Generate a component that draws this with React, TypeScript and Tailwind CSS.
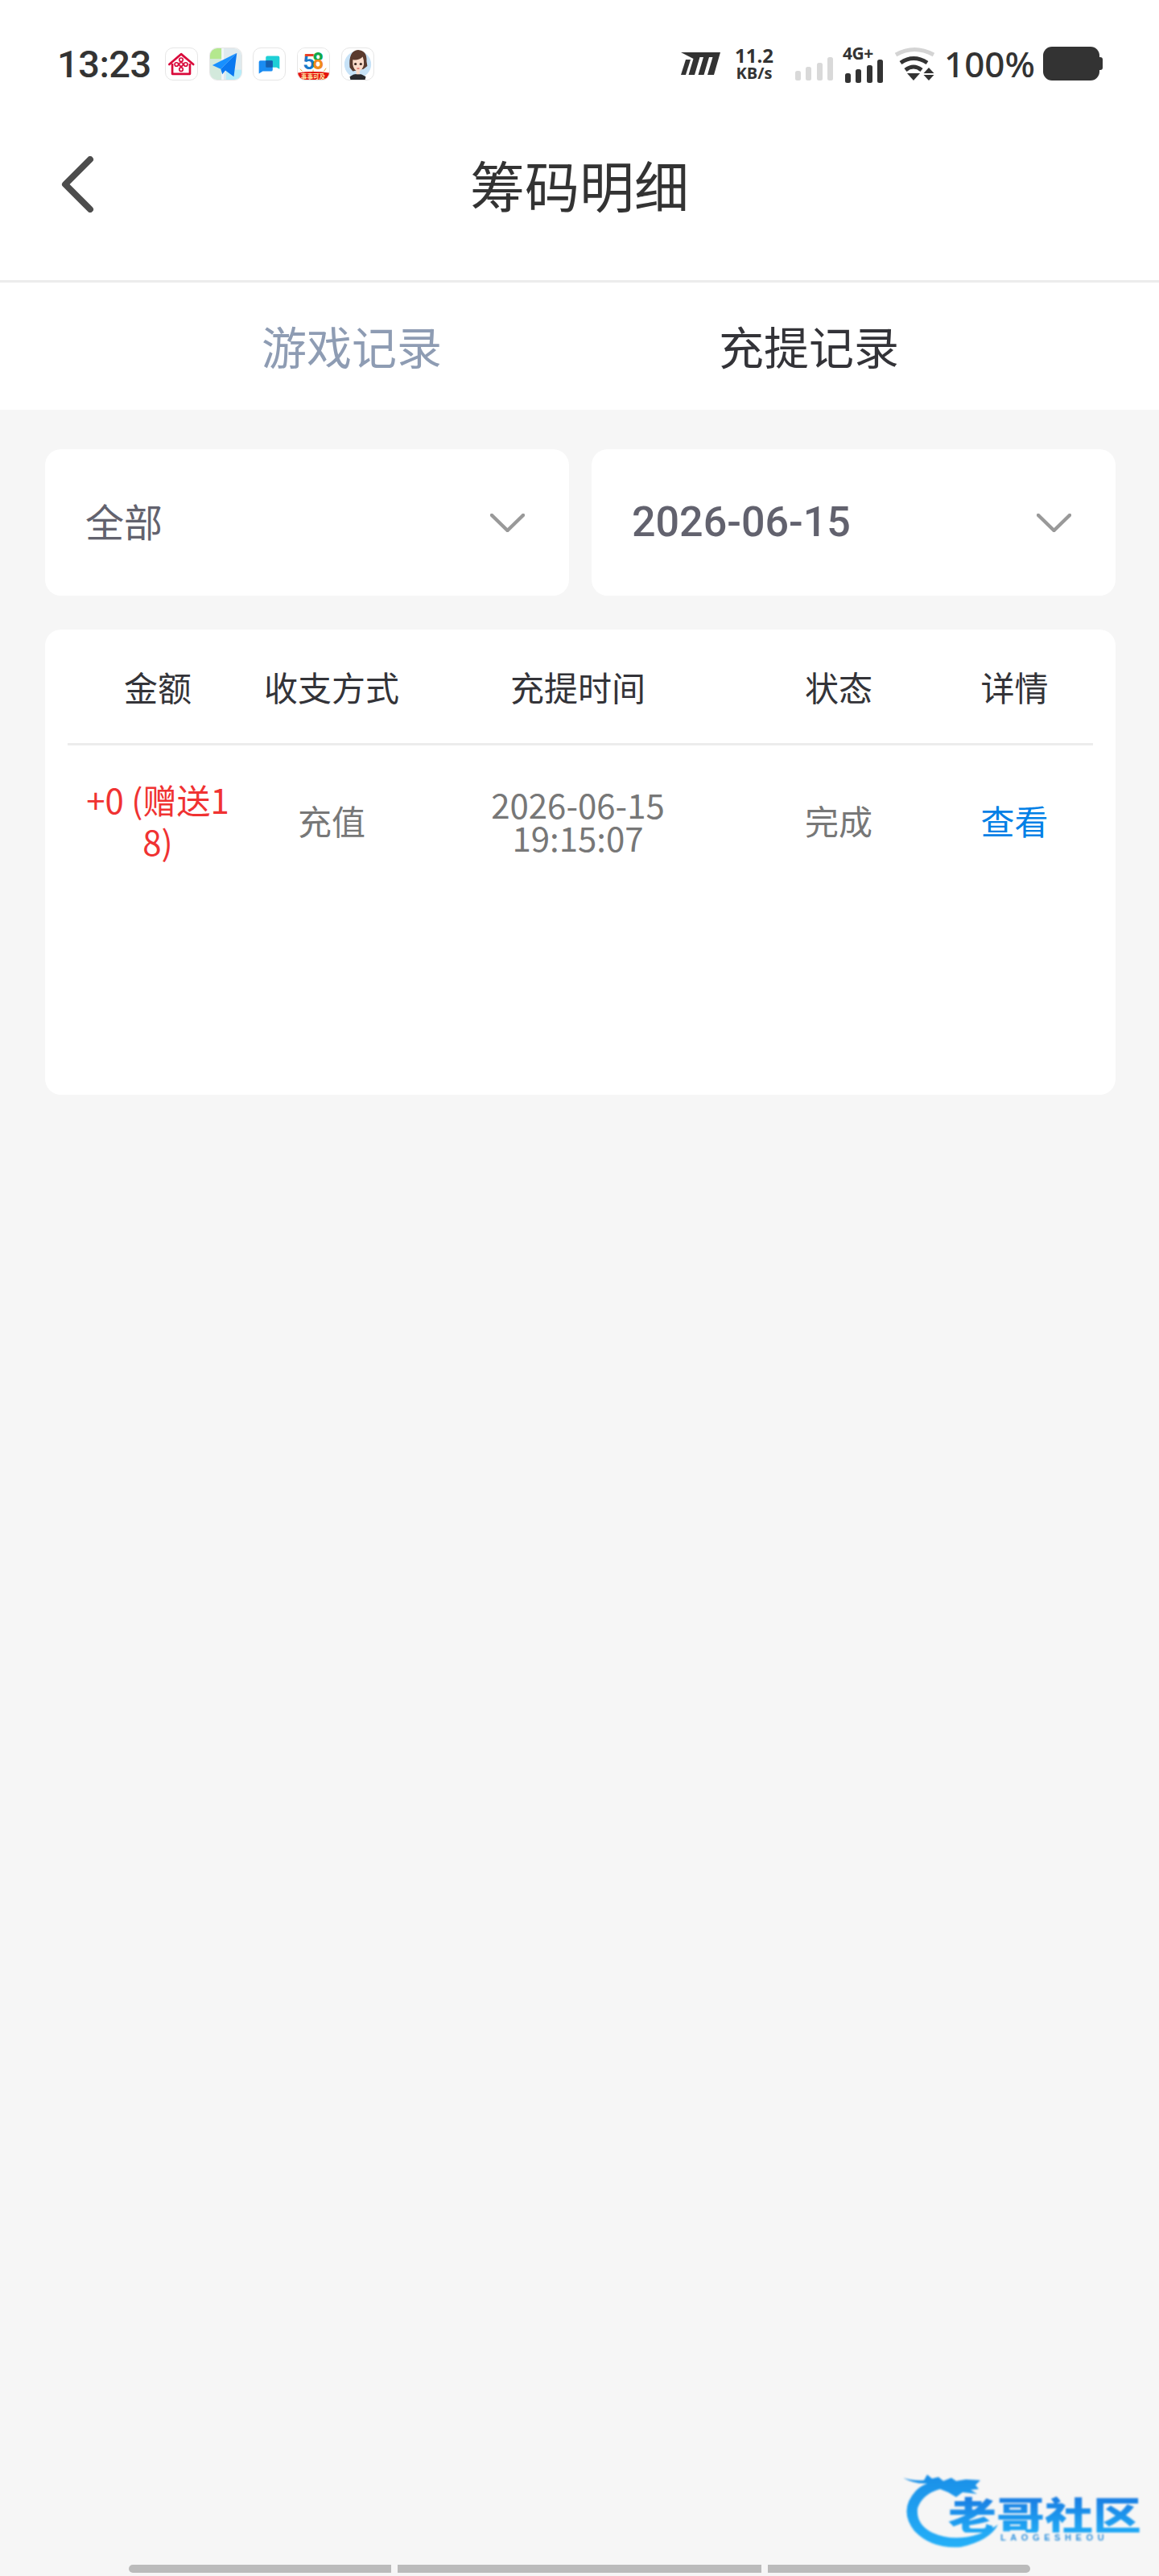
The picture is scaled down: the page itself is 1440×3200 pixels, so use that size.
import React from "react";

function AppIcon({ children }: { children: React.ReactNode }) {
  return (
    <div className="w-[41px] h-[41px] rounded-[10px] border border-[#e6e6e6] overflow-hidden bg-white shrink-0">
      {children}
    </div>
  );
}

function HouseIcon() {
  return (
    <svg viewBox="0 0 41 41" className="w-full h-full" fill="none" stroke="#d9083a">
      <path d="M4.5 21 L20 7.5 L36 21" strokeWidth="2.8" strokeLinecap="round" strokeLinejoin="round" />
      <path d="M8.5 20 V33.5 H31.5 V20" strokeWidth="2.8" strokeLinejoin="round" />
      <circle cx="20" cy="15" r="2.4" strokeWidth="1.7" />
      <circle cx="20" cy="21" r="2.4" strokeWidth="1.7" />
      <circle cx="14" cy="21" r="2.4" strokeWidth="1.7" />
      <circle cx="26" cy="21" r="2.4" strokeWidth="1.7" />
      <circle cx="20" cy="27.5" r="2.4" strokeWidth="1.7" />
    </svg>
  );
}

function PlaneIcon() {
  return (
    <svg viewBox="0 0 41 41" className="w-full h-full">
      <rect width="41" height="41" fill="#dfeaee" />
      <rect width="15" height="14" fill="#b4e88e" />
      <rect x="0" y="14" width="15" height="27" fill="#d3e9dc" />
      <rect x="15" y="0" width="3" height="41" fill="#f2f7f8" />
      <rect x="21" y="28" width="20" height="13" fill="#b6ecf9" />
      <path d="M35 6 L3 22 L14 27 Z" fill="#1790ff" />
      <path d="M35 6 L14 27 L16 34 L20 29 L31 37 Z" fill="#0a78f0" />
    </svg>
  );
}

function ChatIcon() {
  return (
    <svg viewBox="0 0 41 41" className="w-full h-full">
      <path d="M18 10 H32 Q34 10 34 12 V27 L30 25 H18 Q16 25 16 23 V12 Q16 10 18 10 Z" fill="#1fcfd6" />
      <path d="M9 16 H23 Q25 16 25 18 V28 Q25 30 23 30 H12 L7 33 V18 Q7 16 9 16 Z" fill="#1a8cf2" />
      <rect x="16" y="16" width="9" height="9" rx="1" fill="#155fae" />
    </svg>
  );
}

function FiftyEightIcon() {
  return (
    <svg viewBox="0 0 41 41" className="w-full h-full">
      <defs>
        <linearGradient id="five" x1="0" y1="0" x2="0" y2="1">
          <stop offset="0.3" stopColor="#e8402a" />
          <stop offset="0.3" stopColor="#1878c8" />
        </linearGradient>
        <linearGradient id="eight" x1="0" y1="0" x2="0" y2="1">
          <stop offset="0.46" stopColor="#12a84a" />
          <stop offset="0.46" stopColor="#f08a1c" />
        </linearGradient>
      </defs>
      <rect width="41" height="41" fill="#fff" />
      <text x="6.5" y="27" fontSize="28" fontWeight="700" fontFamily="Roboto, sans-serif" fill="url(#five)">5</text>
      <text x="19" y="27" fontSize="31" fontWeight="700" fontFamily="Roboto, sans-serif" fill="url(#eight)" textLength="15" lengthAdjust="spacingAndGlyphs">8</text>
      <path d="M3 27 L6 30 M37 26 L34 30 M20 28 L20 31" stroke="#e8a020" strokeWidth="1" />
      <path d="M0 32 Q20 29 41 32 V41 H0 Z" fill="#e4140f" />
      <text x="4" y="39.5" fontSize="8" fontWeight="700" fontFamily="'Noto Sans CJK SC', sans-serif" fill="#ffe9a8">事事可及</text>
    </svg>
  );
}

function AvatarIcon() {
  return (
    <svg viewBox="0 0 41 41" className="w-full h-full">
      <circle cx="20.5" cy="21" r="17.5" fill="#c7e2f7" />
      <path d="M10 37 Q20 30 31 37 L30 41 H11 Z" fill="#2a2a2e" />
      <path d="M10 25 Q8 3 21 2 Q33 3 32 17 L33 23 L28 27 L14 30 Z" fill="#5a3a2e" />
      <path d="M14 15 Q22 16 27 11 Q29 16 28.5 21 Q27 29 21 30 Q15 29 14 21 Z" fill="#fbdccb" />
      <rect x="18.5" y="28" width="4.5" height="6" fill="#fbdccb" />
      <circle cx="17.5" cy="20.5" r="1.7" fill="#3a2620" />
      <circle cx="24.5" cy="20.5" r="1.7" fill="#3a2620" />
      <path d="M19.5 26 Q21 27 22.5 26" stroke="#d8504e" strokeWidth="1.2" fill="none" />
    </svg>
  );
}

function MiLogo() {
  return (
    <svg viewBox="0 0 49 28" className="w-[49px] h-[28px] shrink-0" fill="#333">
      <path d="M0 0 H49 L41 28 H33 L39.5 6 H35 L28.5 28 H21.5 L28 6 H23.5 L17 28 H9.5 L15.5 8 Z" />
      <path d="M0 28 L6 9 H12 L6 28 Z" />
    </svg>
  );
}

function Signal({ dark }: { dark: boolean }) {
  const color = dark ? "#333" : "#d9d9d9";
  return (
    <svg viewBox="0 0 47 29" className="w-[47px] h-[29px]" fill={color}>
      <rect x="0" y="17" width="7" height="12" rx="2.5" />
      <rect x="13" y="12" width="7" height="17" rx="2.5" />
      <rect x="27" y="7" width="7" height="22" rx="2.5" />
      <rect x="40" y="0" width="7" height="29" rx="2.5" />
    </svg>
  );
}

function Wifi() {
  return (
    <svg viewBox="0 0 51 42" className="w-[51px] h-[42px]" fill="none">
      <path d="M2 10 Q25 -3 49 10" stroke="#d4d4d4" strokeWidth="5" />
      <path d="M8 20 Q24 9 41 20" stroke="#333" strokeWidth="5" />
      <path d="M14 29 Q24 21 34 29" stroke="#333" strokeWidth="5" />
      <path d="M16 33 H32 L24 42 Z" fill="#333" />
      <path d="M43 26 L49.5 33 H36.5 Z" fill="#333" />
      <path d="M36.5 35 H49.5 L43 42 Z" fill="#333" />
    </svg>
  );
}

function Battery() {
  return (
    <div className="flex items-center shrink-0">
      <div className="w-[70px] h-[42px] rounded-[11px] bg-[#333]" />
      <div className="w-[4px] h-[16px] rounded-r-[3px] bg-[#333]" />
    </div>
  );
}

function StatusBar() {
  return (
    <div className="h-[100px] pt-[58px] pl-[71px] pr-[70px] flex justify-between items-start">
      <div className="flex items-center h-[42px]">
        <span className="font-['Roboto'] font-medium text-[47px] leading-none text-[#333] w-[134px] tracking-[-0.5px]">13:23</span>
        <div className="flex gap-[13.7px]">
          <AppIcon><HouseIcon /></AppIcon>
          <AppIcon><PlaneIcon /></AppIcon>
          <AppIcon><ChatIcon /></AppIcon>
          <AppIcon><FiftyEightIcon /></AppIcon>
          <AppIcon><AvatarIcon /></AppIcon>
        </div>
      </div>
      <div className="flex items-center h-[42px]">
        <MiLogo />
        <div className="ml-[17px] w-[50px] flex flex-col items-center font-['Open_Sans'] font-bold text-[#333]">
          <span className="text-[24px] leading-[24px]">11.2</span>
          <span className="text-[20px] leading-[20px]">KB/s</span>
        </div>
        <div className="ml-[26px] self-end">
          <Signal dark={false} />
        </div>
        <div className="ml-[12px] w-[50px] h-[42px] flex flex-col items-start">
          <span className="font-['Open_Sans'] font-bold text-[21px] leading-[15px] mt-[1px] tracking-[-0.5px] text-[#333] whitespace-nowrap">4G+</span>
          <div className="mt-auto ml-[3px]">
            <Signal dark={true} />
          </div>
        </div>
        <div className="ml-[14px]">
          <Wifi />
        </div>
        <span className="ml-[11px] font-['Noto_Sans'] font-medium text-[44px] leading-none text-[#333] w-[123px] whitespace-nowrap">100%</span>
        <Battery />
      </div>
    </div>
  );
}

function ChevronDown() {
  return (
    <svg viewBox="0 0 43 23" className="w-[43px] h-[23px] shrink-0" fill="none" stroke="#999" strokeWidth="4.5" strokeLinecap="round" strokeLinejoin="round">
      <path d="M2 2 L21.5 21 L41 2" />
    </svg>
  );
}

function SelectCard({ label, mono }: { label: string; mono?: boolean }) {
  return (
    <div className="h-[182px] flex-1 rounded-[20px] bg-white pl-[50px] pr-[55px] flex items-center justify-between">
      <span className={mono ? "font-['Roboto'] font-medium text-[52px] leading-none text-[#62626e]" : "text-[48px] leading-none text-[#62626e] -mt-[6px]"}>{label}</span>
      <ChevronDown />
    </div>
  );
}

function Watermark() {
  const glyph = "scale-x-[1.25] bg-gradient-to-b from-[#1a78e0] to-[#22aaf5] bg-clip-text text-transparent";
  return (
    <div className="absolute left-[1122px] top-[3068px] w-[296px] h-[97px] blur-[0.8px]">
      <svg viewBox="0 0 296 97" className="absolute left-0 top-0 w-[296px] h-[97px]">
        <defs>
          <linearGradient id="ring" x1="0" y1="0" x2="0" y2="1">
            <stop offset="0" stopColor="#1a8fe8" />
            <stop offset="1" stopColor="#25b0f8" />
          </linearGradient>
        </defs>
        <path d="M0 10 Q14 14 26 13 L30 6 L36 11 L44 9 L50 14 L60 10 L66 14 L78 12 L96 13 L90 19 L94 24 L84 25 L92 30 L74 28 L66 34 L56 28 L46 24 Q24 30 18 48 Q16 68 36 78 Q62 90 94 80 Q110 74 118 68 Q108 88 72 96 Q36 99 14 76 Q-6 50 16 26 Q22 20 30 17 Q14 18 0 10 Z" fill="url(#ring)" />
      </svg>
      <div className="absolute left-[62px] top-[30px] flex w-[228px] justify-between font-['Noto_Sans_CJK_SC'] font-black text-[48px] leading-[48px] whitespace-nowrap">
        <span className={glyph}>老</span>
        <span className={glyph}>哥</span>
        <span className={glyph}>社</span>
        <span className={glyph}>区</span>
      </div>
      <div className="absolute left-[121px] top-[78px] font-['Liberation_Sans'] font-bold text-[11px] leading-[12px] tracking-[5.6px] text-[#2b8fdc] whitespace-nowrap">LAOGESHEOU</div>
    </div>
  );
}

const cols = "grid grid-cols-[224px_208px_404px_244px_193px] items-center text-center";

export default function App() {
  return (
    <div className="relative w-[1440px] min-h-[3200px] bg-[#f6f6f6] flex flex-col font-['Noto_Sans_CJK_SC',sans-serif] overflow-hidden">
      <header className="bg-white">
        <StatusBar />
        <div className="h-[251px] pt-[10px] pl-[76px] grid grid-cols-[1fr_auto_1fr] items-center border-b-[3px] border-[#ececec]">
          <svg viewBox="0 0 41 70" className="w-[41px] h-[70px]" fill="none" stroke="#4d4d4d" strokeWidth="8" strokeLinecap="round" strokeLinejoin="round">
            <path d="M36 4 L5 35 L36 66" />
          </svg>
          <h1 className="text-[68px] leading-none font-normal text-[#333] -ml-[76px]">筹码明细</h1>
          <div />
        </div>
      </header>

      <div className="h-[158px] pl-[2px] pb-[2px] bg-white flex items-center justify-center gap-[344px] text-[56px] leading-none">
        <span className="text-[#8e9cb3]">游戏记录</span>
        <span className="text-[#333338]">充提记录</span>
      </div>

      <main className="pt-[49px] pl-[56px] pr-[54px]">
        <div className="flex gap-[28px]">
          <SelectCard label="全部" />
          <SelectCard label="2026-06-15" mono />
        </div>

        <section className="mt-[42px] h-[578px] rounded-[20px] bg-white px-[28px]">
          <div className={`${cols} h-[144px] border-b-[3px] border-[#ececec] text-[42px] leading-none text-[#333338]`}>
            <span>金额</span>
            <span>收支方式</span>
            <span>充提时间</span>
            <span>状态</span>
            <span>详情</span>
          </div>
          <div className={`${cols} h-[186px] text-[42px] text-[#777]`}>
            <span className="px-[20px] break-all leading-[52px] text-[#f03232]">+0 (赠送18)</span>
            <span className="leading-none">充值</span>
            <span className="leading-[41px]">2026-06-15<br />19:15:07</span>
            <span className="leading-none">完成</span>
            <span className="leading-none text-[#0080e6]">查看</span>
          </div>
        </section>
      </main>

      <div className="mt-auto mb-[4px] ml-[160px] flex gap-[8px]">
        <div className="w-[326px] h-[10px] rounded-l-[5px] bg-[#bbb]" />
        <div className="w-[452px] h-[10px] bg-[#bbb]" />
        <div className="w-[326px] h-[10px] rounded-r-[5px] bg-[#bbb]" />
      </div>

      <Watermark />
    </div>
  );
}
